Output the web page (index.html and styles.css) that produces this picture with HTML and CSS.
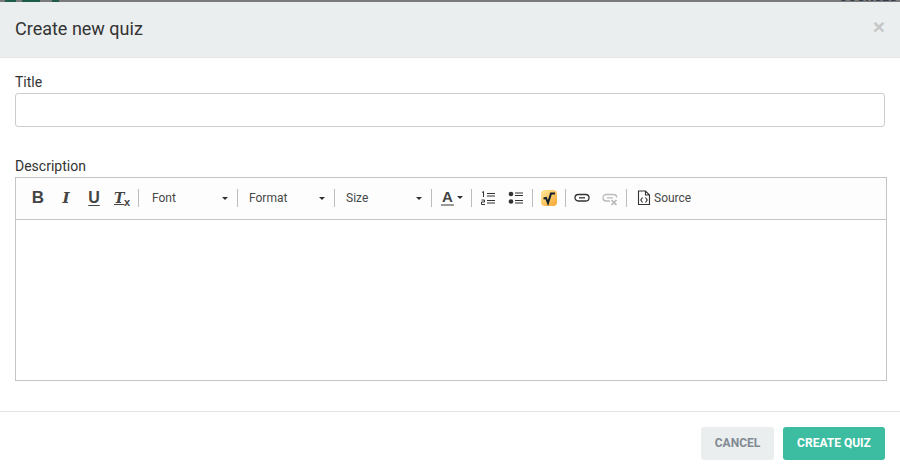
FILE: index.html
```html
<!DOCTYPE html>
<html lang="en">
<head>
<meta charset="utf-8">
<title>Create new quiz</title>
<link rel="stylesheet" href="styles.css">
</head>
<body>
<div class="backdrop"><span class="logo-bits"></span><span class="peek">COURSES</span></div>
<div class="modal">
  <header class="modal-header">
    <h1>Create new quiz</h1>
    <span class="close">×</span>
  </header>
  <div class="modal-body">
    <label class="label label-title">Title</label>
    <input class="input" type="text">
    <label class="label label-desc">Description</label>
    <div class="editor">
      <div class="toolbar">
        <div class="group basics">
          <span class="tb b">B</span>
          <span class="tb i">I</span>
          <span class="tb u">U</span>
          <span class="tb tx"><span class="t">T</span><span class="x">x</span></span>
        </div>
        <span class="sep"></span>
        <span class="combo font">Font<span class="caret"></span></span>
        <span class="sep"></span>
        <span class="combo format">Format<span class="caret"></span></span>
        <span class="sep"></span>
        <span class="combo size">Size<span class="caret"></span></span>
        <span class="sep"></span>
        <span class="color"><span class="a">A</span><span class="caret"></span></span>
        <span class="sep"></span>
        <div class="group lists">
          <svg class="ic" width="16" height="16" viewBox="0 0 16 16"><g fill="none" stroke="#333" stroke-width="1"><path d="M7 3.500h8M7 6h8M7 10.500h8M7 13h8"/><path d="M2 2.500 3.500 1.500V7M1.500 10h3v2h-3v2.500h3.500"/></g></svg>
          <svg class="ic" width="16" height="16" viewBox="0 0 16 16"><circle cx="3" cy="4" r="2.300" fill="#333"/><circle cx="3" cy="11.500" r="2.300" fill="#333"/><path d="M7 3h8M7 5.500h8M7 10.500h8M7 13h8" stroke="#333" stroke-width="1" fill="none"/></svg>
        </div>
        <span class="sep"></span>
        <svg class="ic math" width="16" height="16" viewBox="0 0 16 16"><defs><linearGradient id="g" x1="0" y1="0" x2="1" y2="1"><stop offset="0" stop-color="#ffe99a"/><stop offset="1" stop-color="#f6a531"/></linearGradient></defs><rect width="16" height="16" rx="4" fill="url(#g)"/><path d="M2.500 8.500 5 8 7 13 10 3.500H14" fill="none" stroke="#10202c" stroke-width="2"/></svg>
        <span class="sep"></span>
        <div class="group links">
          <svg class="ic" width="16" height="16" viewBox="0 0 16 16"><g fill="none" stroke="#333" stroke-width="1.300"><rect x="1" y="4.500" width="14" height="6.500" rx="3.200"/><path d="M5 7.800h6"/></g></svg>
          <svg class="ic" width="16" height="16" viewBox="0 0 16 16"><g fill="none" stroke="#bbb" stroke-width="1.300"><path d="M8 11H4.200a3.200 3.200 0 0 1 0-6.500h7.600a3.200 3.200 0 0 1 3 3M5 7.800h6"/><path d="M9.500 10l5 5M14.500 10l-5 5" stroke="#b5b5b5" stroke-width="1.600"/></g></svg>
        </div>
        <span class="sep"></span>
        <span class="source"><svg width="14" height="16" viewBox="0 0 14 16"><path d="M1.500 1h7l4 4v9.500h-11z M8.500 1v4h4" fill="none" stroke="#333" stroke-width="1.100"/><path d="M5.500 7.500 3.800 10l1.700 2.500M8.500 7.500 10.200 10l-1.700 2.500" fill="none" stroke="#333" stroke-width="1.100"/></svg>Source</span>
      </div>
      <div class="content"></div>
    </div>
  </div>
  <footer class="modal-footer">
    <button class="btn cancel">CANCEL</button>
    <button class="btn create">CREATE QUIZ</button>
  </footer>
</div>
</body>
</html>
```
FILE: styles.css
```css
* { box-sizing: border-box; }
html, body { margin: 0; padding: 0; }
body { width: 900px; height: 475px; overflow: hidden; background: #fff; font-family: Roboto, sans-serif; color: #333; }
.backdrop { height: 2px; background: #7a7a7a; display: flex; justify-content: space-between; overflow: hidden; }
.logo-bits { width: 60px; height: 2px; background: linear-gradient(90deg, #7a7a7a 0 5px, #1f5c4a 5px 16px, #7a7a7a 16px 22px, #1f5c4a 22px 40px, #7a7a7a 40px 52px, #1f5c4a 52px 59px, #7a7a7a 59px); }
.peek { font: 700 13px/1 Roboto, sans-serif; color: #333a4d; margin: -10px 3px 0 0; }
.modal-header { height: 56px; background: #ebeeef; border-bottom: 1px solid #e5e5e5; padding: 0 15px; display: flex; align-items: center; justify-content: space-between; }
.modal-header h1 { margin: 0 0 2px; font: 400 18px/1 Roboto, sans-serif; color: #333; }
.close { font: 700 21px/1 "Liberation Sans", sans-serif; color: #c4c6c7; margin-bottom: 6px; }
.modal-body { padding: 0 15px; }
.label { display: block; font: 400 14px/17px Roboto, sans-serif; color: #333; }
.label-title { padding-top: 16px; }
.input { display: block; width: 870px; height: 34px; margin-top: 2px; border: 1px solid #ccc; border-radius: 3px; background: #fff; outline: none; }
.label-desc { margin-top: 31px; }
.editor { width: 872px; height: 204px; margin-top: 2px; border: 1px solid #c4c4c4; display: flex; flex-direction: column; }
.toolbar { height: 42px; background: #fdfdfd; border-bottom: 1px solid #c4c4c4; display: flex; align-items: center; padding: 0 0 2px 14px; flex: none; }
.content { flex: 1; background: #fff; }
.group { display: flex; align-items: center; }
.tb { display: block; width: 16px; text-align: center; font: 700 17px/16px "Liberation Sans", sans-serif; color: #444; margin-right: 12px; }
.tb.i { font: italic 700 15px/16px "DejaVu Serif", serif; }
.tb.u { font-size: 16px; text-decoration: underline; text-underline-offset: 2px; }
.tb.tx { position: relative; margin-right: 8px; text-align: left; }
.tx .t { font: italic 700 14px/16px "DejaVu Serif", serif; text-decoration: underline; }
.tx .x { position: absolute; left: 10px; top: 7px; font: 700 11px/11px "Liberation Sans", sans-serif; }
.sep { width: 1px; height: 18px; background: #bcbcbc; flex: none; }
.combo { position: relative; font: 400 12px/16px Roboto, sans-serif; color: #484848; padding-left: 13px; display: block; }
.combo.font { width: 98px; }
.combo.format, .combo.size { width: 96px; padding-left: 11px; }
.caret { display: inline-block; width: 0; height: 0; border-left: 3px solid transparent; border-right: 3px solid transparent; border-top: 3px solid #2f2f2f; }
.combo .caret { position: absolute; right: 9px; top: 7px; }
.color { width: 39px; display: flex; align-items: center; padding-left: 9px; gap: 3px; }
.color .a { font: 700 15px/14px "Liberation Sans", sans-serif; color: #444; border-bottom: 2px solid #999; width: 13px; text-align: center; }
.ic { display: block; flex: none; }
.lists { padding: 0 8px; gap: 12px; }
.math { margin: 0 8px; }
.links { padding: 0 8px; gap: 12px; }
.source { display: flex; align-items: center; gap: 3px; padding-left: 10px; font: 400 12px/16px Roboto, sans-serif; color: #484848; }
.modal-footer { margin-top: 30px; border-top: 1px solid #e5e5e5; padding: 15px 15px 0; display: flex; justify-content: flex-end; gap: 9px; }
.btn { height: 33px; border: 0; border-radius: 3px; font: 700 12px/33px Roboto, sans-serif; padding: 0; }
.cancel { width: 73px; background: #ebeeef; color: #7f8a93; }
.create { width: 102px; background: #3cbca0; color: #fff; }
```
